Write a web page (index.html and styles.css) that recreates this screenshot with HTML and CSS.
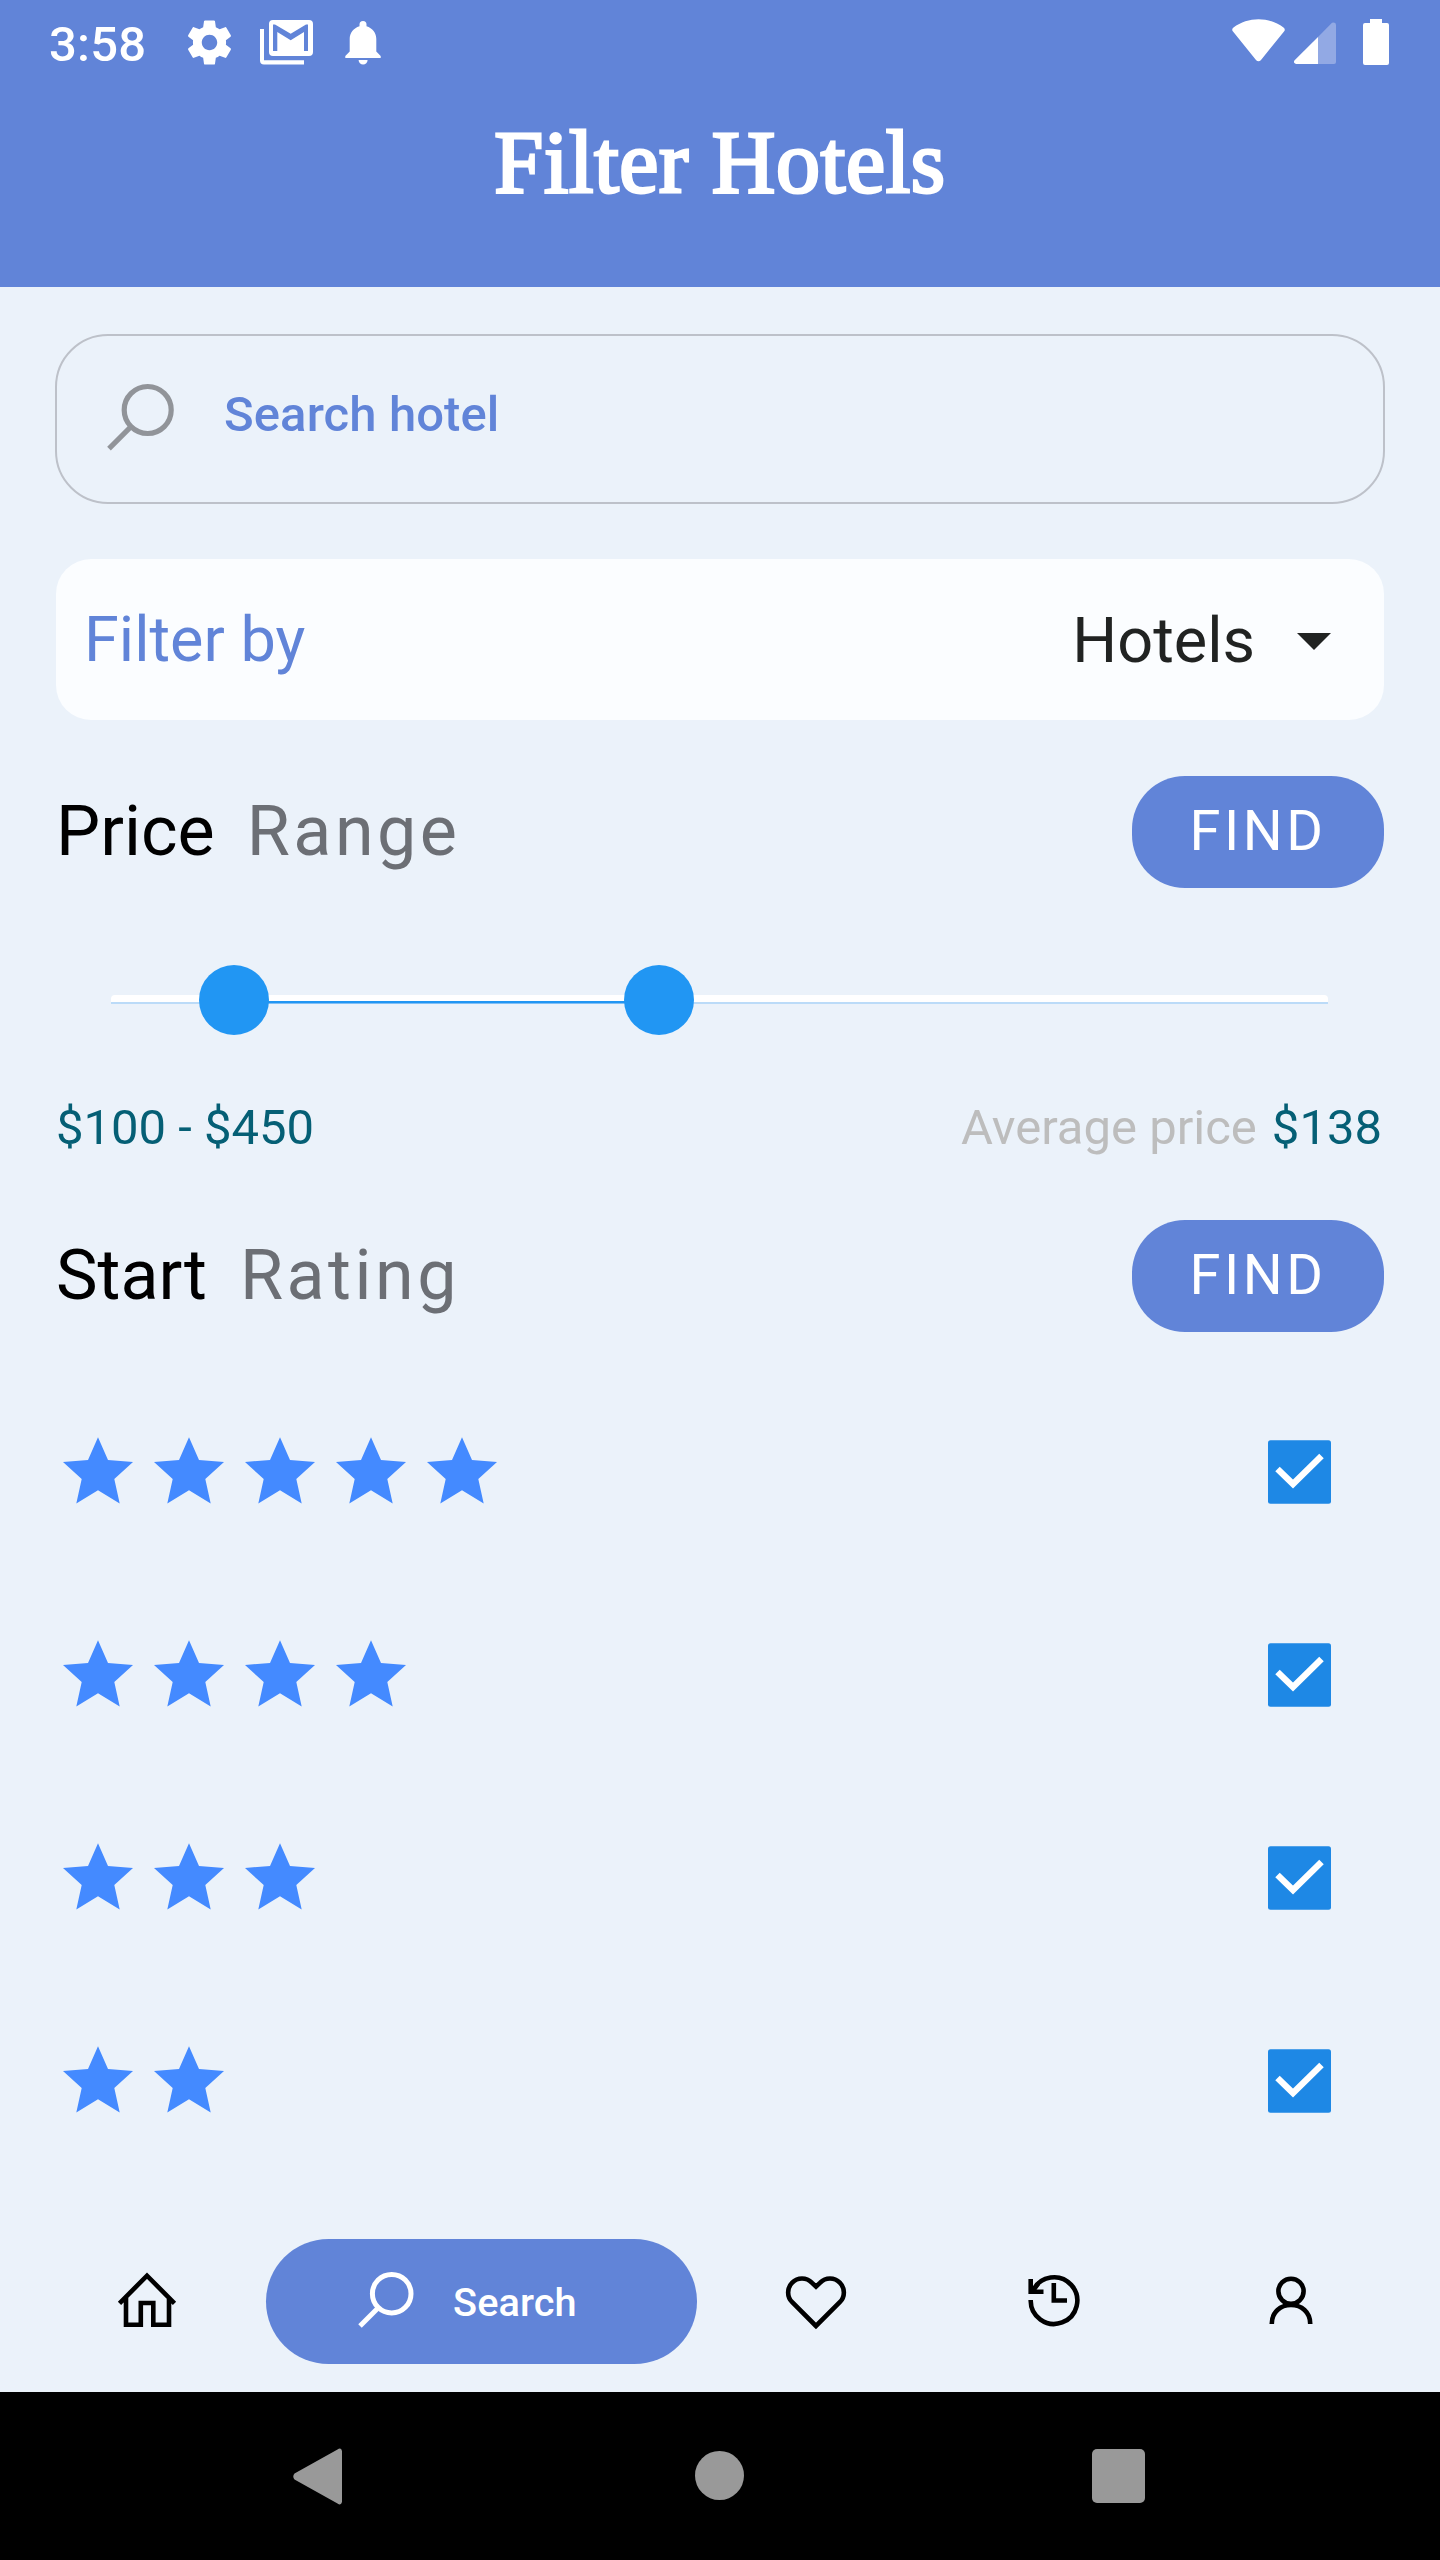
FILE: index.html
```html
<!DOCTYPE html>
<html lang="en">
<head>
<meta charset="utf-8">
<title>Filter Hotels</title>
<link rel="stylesheet" href="styles.css">
</head>
<body>
<svg class="defs" aria-hidden="true">
  <symbol id="star" viewBox="0 0 70 67"><path d="M35 0.3 45 23 70 25 51.3 42 56.7 66.6 35 53.3 13.3 66.6 18.7 42 0 25 25 23Z"/></symbol>
  <symbol id="check" viewBox="0 0 63 64"><rect y="0.2" width="63" height="63.5" rx="2.5" fill="#1e88e5"/><path d="M9.5 29 25 44 53.5 16" fill="none" stroke="#fff" stroke-width="6.4"/></symbol>
</svg>
<div class="screen">
  <header class="header">
    <div class="status">
      <span class="time">3:58</span>
      <svg class="gear" width="53" height="53" viewBox="0 0 24 24"><path fill="#fff" d="M19.43 12.98c.04-.32.07-.64.07-.98s-.03-.66-.07-.98l2.11-1.65c.19-.15.24-.42.12-.64l-2-3.46c-.12-.22-.39-.3-.61-.22l-2.49 1c-.52-.4-1.08-.73-1.69-.98l-.38-2.65C14.46 2.18 14.25 2 14 2h-4c-.25 0-.46.18-.49.42l-.38 2.65c-.61.25-1.17.59-1.69.98l-2.49-1c-.23-.09-.49 0-.61.22l-2 3.46c-.13.22-.07.49.12.64l2.11 1.65c-.04.32-.07.65-.07.98s.03.66.07.98l-2.11 1.65c-.19.15-.24.42-.12.64l2 3.46c.12.22.39.3.61.22l2.49-1c.52.4 1.08.73 1.69.98l.38 2.65c.03.24.24.42.49.42h4c.25 0 .46-.18.49-.42l.38-2.65c.61-.25 1.17-.59 1.69-.98l2.49 1c.23.09.49 0 .61-.22l2-3.46c.12-.22.07-.49-.12-.64l-2.11-1.65zM12 15.5c-1.93 0-3.5-1.57-3.5-3.5s1.57-3.5 3.5-3.5 3.5 1.57 3.5 3.5-1.57 3.5-3.5 3.5z"/></svg>
      <svg class="mail" width="53" height="45" viewBox="0 0 53 45"><path fill="#fff" d="M0 9h4v31.3h40v4.2H4a4 4 0 0 1-4-4Z"/><path fill="#fff" fill-rule="evenodd" d="M13 0H49a4 4 0 0 1 4 4V32a4 4 0 0 1-4 4H13a4 4 0 0 1-4-4V4A4 4 0 0 1 13 0ZM13 31H17.300V12L30.700 20.300 44 12V31H48V4.500H46L30.700 13.800 15 4.500H13Z"/></svg>
      <svg class="bell" width="36" height="45" viewBox="0 0 36 45"><path fill="#fff" d="M18 1a3.500 3.500 0 0 1 3.500 3.500V6.200C27.500 8 31.300 13 31.300 19V31.500L35.700 36V38H.3V36L4.700 31.500V19C4.700 13 8.500 8 14.500 6.200V4.500A3.500 3.500 0 0 1 18 1ZM13.600 40h9a4.500 4.500 0 0 1-9 0Z"/></svg>
      <span class="fill"></span>
      <svg class="wifi" width="53" height="43" viewBox="0 0 53 43"><path fill="#fff" d="M1 12.500Q-.8 10.300 1.500 8.500C16-2.500 37-2.500 51.500 8.500Q53.800 10.300 52 12.500L28.800 41.200Q26.500 43.500 24.200 41.200Z"/></svg>
      <svg class="signal" width="42" height="42" viewBox="0 0 42 42"><path fill="#92a9e4" d="M24 15 38 .8Q42-.6 42 3V40q0 2-2 2H24Z"/><path fill="#fff" d="M24 15V42H2Q-1.300 41 .6 38.300Z"/></svg>
      <svg class="battery" width="26" height="46" viewBox="0 0 26 46"><path fill="#fff" d="M7 0H19V4H24q2 0 2 2V44q0 2-2 2H2q-2 0-2-2V6q0-2 2-2H7Z"/></svg>
    </div>
    <h1 class="title">Filter Hotels</h1>
  </header>

  <main class="content">
    <div class="search">
      <svg width="60" height="60" viewBox="0 0 60 60" fill="none" stroke="#919499" stroke-width="5.2"><circle cx="40.700" cy="28" r="23.500"/><path d="M24 44.700 2 66.700"/></svg>
      <span class="placeholder">Search hotel</span>
    </div>

    <div class="filter">
      <span class="filter-label">Filter by</span>
      <span class="filter-value">Hotels</span>
      <svg class="caret" width="34" height="17" viewBox="0 0 34 17"><path fill="#212322" d="M0 0H34L17 17Z"/></svg>
    </div>

    <div class="heading">
      <span class="strong">Price</span><span class="soft range">Range</span>
      <button class="find">FIND</button>
    </div>

    <div class="slider">
      <div class="track"></div>
      <div class="active"></div>
      <i class="thumb low"></i>
      <i class="thumb high"></i>
    </div>

    <div class="prices">
      <span class="amount">$100 - $450</span>
      <span class="average">Average price</span>
      <span class="amount avg-value">$138</span>
    </div>

    <div class="heading">
      <span class="strong">Start</span><span class="soft rating">Rating</span>
      <button class="find">FIND</button>
    </div>

    <div class="ratings">
      <div class="row"><div class="stars"><svg><use href="#star"/></svg><svg><use href="#star"/></svg><svg><use href="#star"/></svg><svg><use href="#star"/></svg><svg><use href="#star"/></svg></div><svg class="check"><use href="#check"/></svg></div>
      <div class="row"><div class="stars"><svg><use href="#star"/></svg><svg><use href="#star"/></svg><svg><use href="#star"/></svg><svg><use href="#star"/></svg></div><svg class="check"><use href="#check"/></svg></div>
      <div class="row"><div class="stars"><svg><use href="#star"/></svg><svg><use href="#star"/></svg><svg><use href="#star"/></svg></div><svg class="check"><use href="#check"/></svg></div>
      <div class="row"><div class="stars"><svg><use href="#star"/></svg><svg><use href="#star"/></svg></div><svg class="check"><use href="#check"/></svg></div>
    </div>
  </main>

  <nav class="tabs">
    <svg class="home" width="60" height="60" viewBox="0 0 60 60"><path d="M2.500 32.300 30 4.700 57.500 32.300M9 27V53.800H23.800V32H36.300V53.800H52V27"/></svg>
    <div class="pill">
      <svg width="60" height="60" viewBox="0 0 60 60"><circle cx="33.700" cy="22.700" r="19.300"/><path d="M20 37 2 55"/></svg>
      <span class="pill-label">Search</span>
    </div>
    <svg class="heart" width="60" height="60" viewBox="0 0 60 60"><path d="M30 55 6.200 31.200A13.800 13.800 0 0 1 25.800 11.600L30 15.600 34.200 11.600A13.800 13.800 0 0 1 53.800 31.200Z"/></svg>
    <svg class="history" width="60" height="60" viewBox="0 0 60 60"><path d="M6.700 29A23.300 23.300 0 1 0 9 19.500M6.700 8V20.800H19.500M29.800 12V29.500H43"/><path d="M5 22 14 10 16 14 10 22Z" fill="#000" stroke="none"/></svg>
    <svg class="user" width="60" height="60" viewBox="0 0 60 60"><circle cx="30" cy="20.300" r="12.600"/><path d="M10.800 53V52.500C10.800 41 19.500 34 30 34S49.200 41 49.200 52.500V53"/></svg>
  </nav>

  <footer class="system">
    <svg width="49" height="57" viewBox="0 0 49 57"><path d="M49 3V54Q48 58 44.500 55.500L1.500 31.500Q-1 28.500 1.500 25.500L44.500 1.500Q48-1 49 3Z"/></svg>
    <svg class="sys-home" width="49" height="49" viewBox="0 0 49 49"><circle cx="24.500" cy="24.500" r="24.500"/></svg>
    <svg class="sys-recent" width="53" height="54" viewBox="0 0 53 54"><rect width="53" height="54" rx="5"/></svg>
  </footer>
</div>
</body>
</html>
```

FILE: styles.css
```css
* { box-sizing: border-box; }

body {
  margin: 0;
  font-family: Roboto, sans-serif;
  background: #ebf2fa;
}

svg { display: block; flex: none; }

.defs { display: none; }

.screen {
  display: flex;
  flex-direction: column;
  width: 1440px;
  height: 2560px;
  background: #ebf2fa;
  white-space: nowrap;
}

/* Header */
.header { height: 287px; background: #6184d8; }

.status {
  display: flex;
  align-items: flex-start;
  height: 85px;
  padding: 0 51px 0 49px;
}

.time {
  width: 134px;
  margin-top: 15px;
  font-size: 49px;
  line-height: 60px;
  font-weight: 500;
  letter-spacing: 0.2px;
  color: #fff;
}

.gear { margin-top: 16px; }
.mail { margin: 20px 0 0 24px; }
.bell { margin: 20px 0 0 32px; }
.fill { flex: 1; }
.wifi { margin-top: 19px; }
.signal { margin: 22px 0 0 9px; }
.battery { margin: 19px 0 0 27px; }

.title {
  margin: 28px 0 0;
  font: 400 88px/100px "Liberation Serif", serif;
  letter-spacing: 0.7px;
  text-align: center;
  color: #fff;
  -webkit-text-stroke: 3px #fff;
}

/* Content */
.content { padding: 47px 56px 0; }

.search {
  display: flex;
  align-items: center;
  height: 170px;
  margin: 0 -1px;
  padding-left: 50px;
  border: 2px solid #bdc1c9;
  border-radius: 53px;
}

.search svg { margin-top: -14px; overflow: visible; }

.placeholder {
  margin: 0 0 9px 57px;
  font-size: 49px;
  font-weight: 500;
  letter-spacing: 0.1px;
  color: #6184d8;
}

.filter {
  display: flex;
  align-items: center;
  height: 161px;
  margin-top: 55px;
  padding: 0 53px 0 28px;
  border-radius: 35px;
  background: #fbfdff;
  font-size: 63px;
}

.filter-label { color: #6184d8; }
.filter-value { margin: 2px 42px 0 auto; color: #212322; }
.caret { margin-top: 4px; }

.heading {
  display: flex;
  align-items: center;
  height: 112px;
  margin-top: 56px;
  font-size: 70px;
}

.strong { padding-bottom: 2px; }
.soft { padding-bottom: 2px; letter-spacing: 3.5px; color: #6c6f75; }
.range { margin-left: 32px; }
.rating { margin-left: 33px; }

.find {
  width: 252px;
  height: 112px;
  margin-left: auto;
  padding: 0 0 2px;
  border: 0;
  border-radius: 53px;
  background: #6184d8;
  font-family: inherit;
  font-size: 56px;
  letter-spacing: 3.5px;
  color: #fff;
}

/* Price slider */
.slider { position: relative; height: 210px; }

.track {
  position: absolute;
  left: 55px;
  top: 107px;
  width: 1217px;
  height: 9px;
  border-bottom: 2px solid #bbdbf8;
  border-radius: 4px 4px 0 0;
  background: #fff;
}

.active {
  position: absolute;
  left: 178px;
  top: 113px;
  width: 425px;
  height: 3px;
  border-bottom: 1px solid #7fbff6;
  background: #2196f3;
}

.thumb {
  position: absolute;
  top: 77px;
  width: 70px;
  height: 70px;
  border-radius: 50%;
  background: #2196f3;
}

.low { left: 142.5px; }
.high { left: 568px; }

.prices {
  display: flex;
  align-items: center;
  height: 58px;
  font-size: 49px;
}

.amount { color: #055f75; }
.average { margin-left: auto; color: #bdbdbd; }
.avg-value { margin: 0 2px 0 15px; }

.prices + .heading { margin-top: 64px; }

/* Star ratings */
.ratings { padding-top: 38px; }

.row {
  display: flex;
  justify-content: space-between;
  align-items: center;
  height: 203px;
  padding: 0 53px 0 7px;
}

.stars { display: flex; gap: 21px; margin-top: -2px; }
.stars svg { width: 70px; height: 67px; fill: #448aff; }
.check { width: 63px; height: 64px; }

/* Bottom tabs */
.tabs {
  display: flex;
  align-items: center;
  height: 182px;
  margin-top: auto;
  padding: 0 119px 0 117px;
}

.tabs svg {
  fill: none;
  stroke: #000;
  stroke-width: 4.6;
  overflow: visible;
}

.pill {
  display: flex;
  align-items: center;
  width: 431px;
  height: 125px;
  margin-left: 89px;
  padding: 0 0 0 92px;
  border-radius: 62.5px;
  background: #6184d8;
  font-size: 39.7px;
  font-weight: 500;
  color: #fff;
}

.tabs .pill svg { margin-right: 35px; stroke: #fff; stroke-width: 5; }
.pill-label { padding-top: 2px; letter-spacing: 0.1px; }
.heart { margin-left: 89px; }
.history { margin-left: 178px; }
.user { margin-left: 176.5px; }

/* System navigation */
.system {
  display: flex;
  align-items: center;
  height: 168px;
  padding-left: 293px;
  background: #000;
}

.system svg { fill: #999; }
.sys-home { margin: 0 0 1px 353px; }
.sys-recent { margin-left: 348px; }
```
